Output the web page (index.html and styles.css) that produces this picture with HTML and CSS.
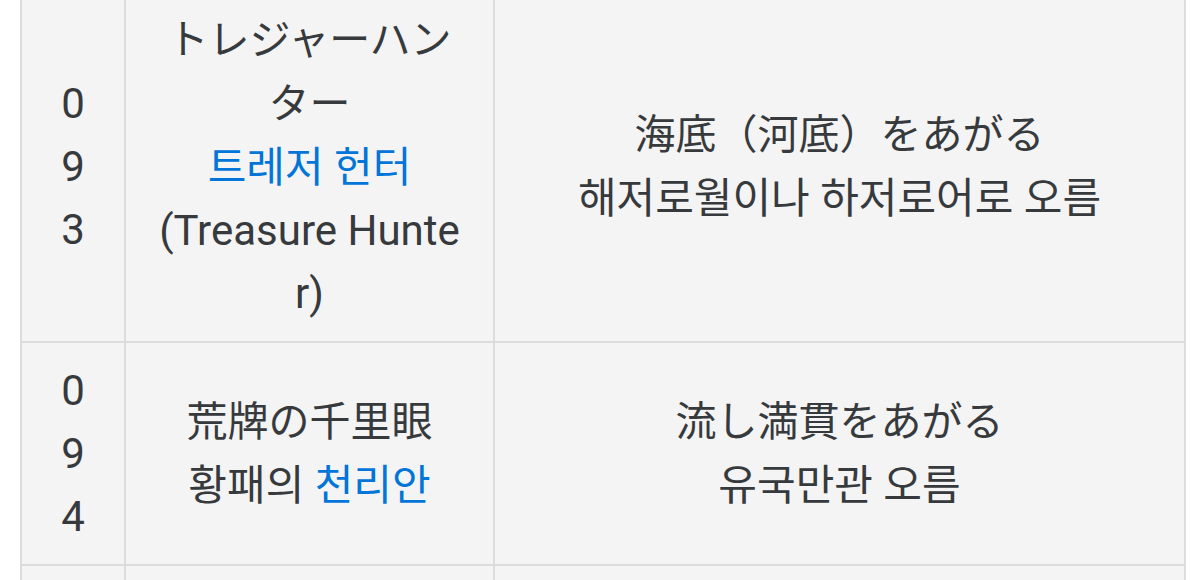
FILE: index.html
```html
<!DOCTYPE html>
<html lang="ko">
<head>
<meta charset="utf-8">
<link rel="stylesheet" href="styles.css">
</head>
<body>
<table class="tbl">
  <colgroup>
    <col class="c-num">
    <col class="c-name">
    <col class="c-cond">
  </colgroup>
  <tbody>
    <tr>
      <td class="num">093</td>
      <td class="name"><span class="ja">トレジャーハンター</span><br><a class="lnk" href="#">트레저 헌터</a><br>(Treasure Hunter)</td>
      <td class="cond"><span class="ja">海底（河底）をあがる</span><br>해저로월이나 하저로어로 오름</td>
    </tr>
    <tr>
      <td class="num">094</td>
      <td class="name"><span class="ja">荒牌の千里眼</span><br>황패의 <a class="lnk" href="#">천리안</a></td>
      <td class="cond"><span class="ja">流し満貫をあがる</span><br>유국만관 오름</td>
    </tr>
    <tr>
      <td class="num">&nbsp;</td>
      <td class="name">&nbsp;</td>
      <td class="cond">&nbsp;</td>
    </tr>
  </tbody>
</table>
</body>
</html>
```
FILE: styles.css
```css
html, body {
  margin: 0;
  padding: 0;
  background: #ffffff;
  overflow: hidden;
}
body {
  font-family: Roboto, "Noto Sans CJK KR", sans-serif;
  color: #373a3c;
}
.tbl {
  margin: -10px 0 0 20px;
  width: 1166px;
  border-collapse: collapse;
  table-layout: fixed;
  background: #f4f4f4;
  font-size: 42px;
  line-height: 63px;
}
.c-num { width: 104px; }
.c-name { width: 369px; }
.tbl td {
  border: 2px solid #dcdcdc;
  padding: 16px 28px;
  text-align: center;
  vertical-align: middle;
  word-break: break-all;
}
.ja {
  font-family: Roboto, "Noto Sans CJK JP", sans-serif;
  font-size: 41px;
}
.lnk {
  color: #0275d8;
  text-decoration: none;
}
```
